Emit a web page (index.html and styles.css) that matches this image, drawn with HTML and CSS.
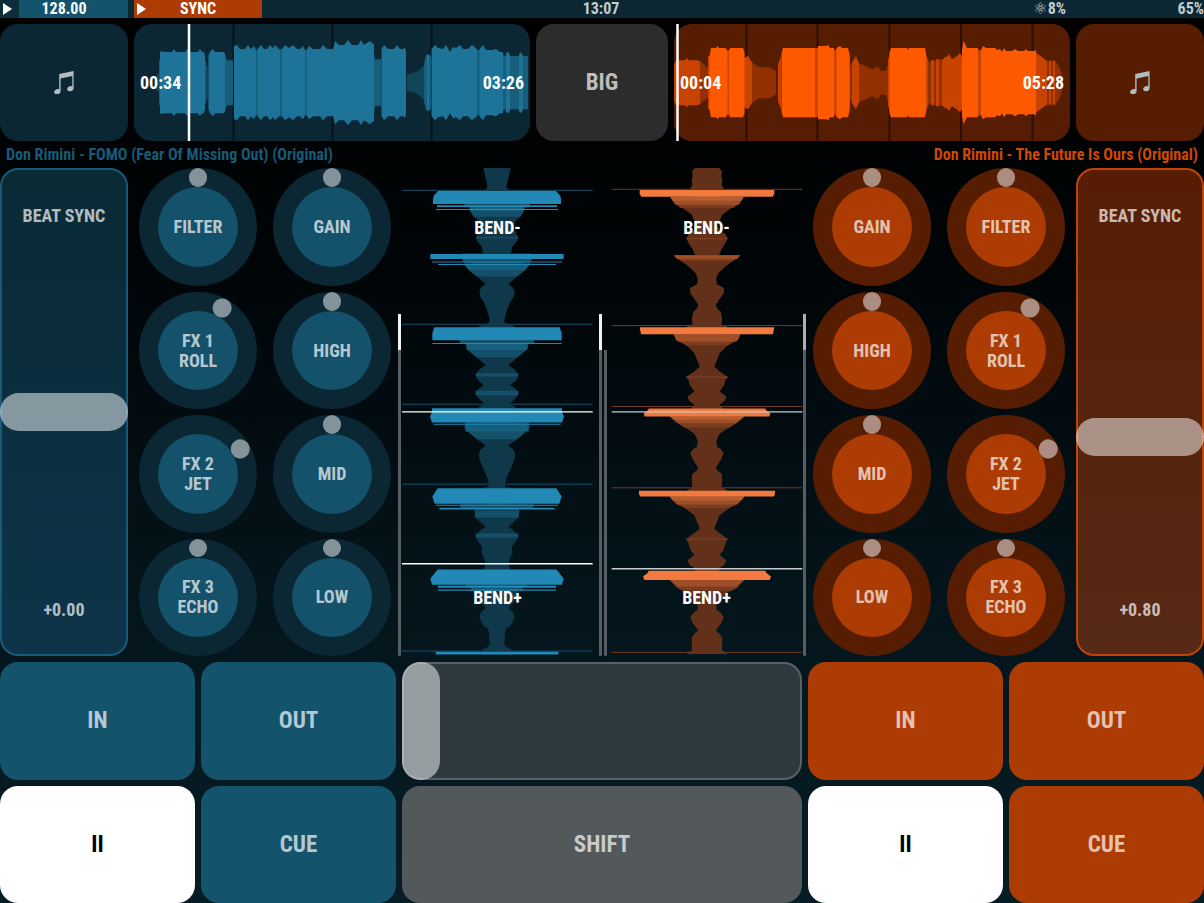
FILE: index.html
```html
<!DOCTYPE html>
<html lang="en">
<head>
<meta charset="utf-8">
<title>DJ Decks</title>
<link rel="stylesheet" href="styles.css">
</head>
<body>
<svg class="defs" aria-hidden="true">
  <symbol id="note" viewBox="0 0 20 23">
    <path d="M5.2 2.9 19.6 0V17.2a3.3 2.6 -20 1 1-1.3-1.9V5.1L6.6 7.4V20.3a3.3 2.6 -20 1 1-1.4-2z"/>
  </symbol>
</svg>
<main class="app">
  <header class="status">
    <div class="tempo blue"><svg class="play" viewBox="0 0 9 12"><path d="M0 0 9 6 0 12z"/></svg><span>128.00</span></div>
    <div class="tempo orange"><svg class="play" viewBox="0 0 9 12"><path d="M0 0 9 6 0 12z"/></svg><span>SYNC</span></div>
    <time class="clock">13:07</time>
    <span class="load"><span class="atom">⚛</span>8%</span>
    <span class="battery">65%</span>
  </header>

  <section class="overviews">
    <button class="tile blue-dark" aria-label="Browse left deck"><svg class="note"><use href="#note"/></svg></button>
    <div class="overview blue-dark">
      <svg viewBox="134 24 396 117" preserveAspectRatio="none" aria-hidden="true">
        <path class="tick" d="M233.500 24V141M332.500 24V141M431.500 24V141"/>
        <g id="ovL">
          <path fill="#114557" d="M155 83V78L157 74H159V83zM205 83V64L208 66V83zM407 83V74L413 73L419 70L424 65L426 60V83z"/>
          <path fill="#175e7b" d="M159 83V60H161V83zM204 83V58L206 62V83zM225 83V54L227 60H233V83zM255 83V50H258V83zM279 83V49H283V83zM304 83V50H307V83zM373 83V46L375 59H381V83zM424 83V64L426 55L428 54L431 56V83zM477 83V50H480V83zM502 83V54L505 56H528V83z"/>
          <path fill="#1d7398" d="M160 83V52L162 51L164 52H172L174 49L176 52H185L187 49L189 52H198L200 49L202 52H204L205 56V83zM208.500 83V56L210 52L213 49L215 52H224L225 54V83zM234 83V46L237 45L240 49H245L248 45L251 49L254 46L256 50V83zM257.500 83V49L261 45L264 49H267L270 45L273 48L275 45L280 50V83zM282 83V49L285 45L289 48L293 45L297 49H300L303 46L305 50V83zM306.500 83V50L309 46L313 49H320L323 45L327 49H333L335 41L339 45L344 45L348 40L352 45H358L361 40L364 45L370 41L373 44L374 43V83zM381.500 83V49L384 45L388 49H394L397 45L400 49H403L405 47L406 52V83zM427 83V56L429 55V83zM431.500 83V49L435 45L438 48L443 49L446 45L450 52L453 47L456 48L460 45L463 49H468L472 45L477 49V83zM479.500 83V49L483 45L486 50H492L496 49L500 52H503V83zM506 83V53L508 52L510 55V83zM519 83V54L521 52L523 56V83z"/>
        </g>
        <use href="#ovL" transform="translate(0 165) scale(1 -1)"/>
        <path class="playhead" d="M189 24V141"/>
      </svg>
      <span>00:34</span><span>03:26</span>
    </div>
    <button class="tile gray-dark">BIG</button>
    <div class="overview orange-dark">
      <svg viewBox="674 24 396 117" preserveAspectRatio="none" aria-hidden="true">
        <path class="tick" d="M746.500 24V141M817.500 24V141M889.500 24V141M961 24V141M1032.500 24V141"/>
        <g id="ovR">
          <path fill="#933000" d="M700 83V61L708 68V83zM752 83V62L759 67H770L776 71V83zM850 83V66L854 60V83zM859 83V63L866 66L872 69L878 66L881 71L886 70L889 62V83zM927 83V58L930 62L935 60L942 59V83zM1047 83V60H1055L1060 68L1063 78V83z"/>
          <path fill="#c94300" d="M674 83V64L676 60H685L687 58L689 60H697L700 61V83zM708 83V56H710V83zM726 83V50H730V83zM744 83V58L748 56L752 62V83zM778 83V64L781 56V83zM815 83V48H818V83zM834 83V50H837V83zM849 83V56H850V83zM852 83V62L856 56L859 63V83zM888 83V60L890 52V83zM925 83V50L928 60V83zM931 83V60H934V83zM936 83V59H939V83zM942 83V60L945 57H947L949 54L952 59L957 56L960 53L962 56V83zM978 83V50H981V83zM1035 83V52L1042 57L1047 61V83zM1049 83V61H1051V83zM1053 83V61H1055V83z"/>
          <path fill="#ff5900" d="M709.500 83V56L711 48H716L717.500 46L719 48H726L727.500 53V83zM729 83V52L730 48H743L744.500 52V83zM781.500 83V54L783 48H815V83zM818 83V46H826L828 45L830 48H834V83zM836.500 83V48L840 46L842 48H848L849.500 54V83zM889.500 83V52L891 48H907L908 50L909 48H925L926 54V83zM962 83V50L963.500 41L967 48H978V83zM981 83V50L983 46L986 48H995L997 50L1000 49L1002 52L1004 48L1006 51H1012L1015 49L1018 51H1024L1026 49L1028 51H1034L1036 50V83z"/>
        </g>
        <use href="#ovR" transform="translate(0 165) scale(1 -1)"/>
        <path class="playhead" d="M677.500 24V141"/>
      </svg>
      <span>00:04</span><span>05:28</span>
    </div>
    <button class="tile orange-dark" aria-label="Browse right deck"><svg class="note"><use href="#note"/></svg></button>
  </section>

  <section class="titles">
    <span class="title-left">Don Rimini - FOMO (Fear Of Missing Out) (Original)</span>
    <span class="title-right">Don Rimini - The Future Is Ours (Original)</span>
  </section>

  <section class="mixer">
    <div class="fader fader-left">
      <label for="tempoL">BEAT SYNC</label><output for="tempoL">+0.00</output>
      <input id="tempoL" type="range" min="0" max="1000" value="499">
    </div>
    <div class="knobs blue-knobs">
      <label class="knob"><span class="cap">FILTER</span><span class="arm"></span><input type="range"></label>
      <label class="knob"><span class="cap">GAIN</span><span class="arm"></span><input type="range"></label>
      <label class="knob"><span class="cap">FX 1<br>ROLL</span><span class="arm at-30"></span><input type="range"></label>
      <label class="knob"><span class="cap">HIGH</span><span class="arm"></span><input type="range"></label>
      <label class="knob"><span class="cap">FX 2<br>JET</span><span class="arm at-60"></span><input type="range"></label>
      <label class="knob"><span class="cap">MID</span><span class="arm"></span><input type="range"></label>
      <label class="knob"><span class="cap">FX 3<br>ECHO</span><span class="arm"></span><input type="range"></label>
      <label class="knob"><span class="cap">LOW</span><span class="arm"></span><input type="range"></label>
    </div>
    <div class="waves">
      <svg viewBox="397 168 410 488" preserveAspectRatio="none" aria-hidden="true">
        <g transform="translate(497 160) scale(.33333)">
          <path stroke="#15506e" stroke-width="3" d="M-285 91H287M-285 493H287M-285 733H287M-285 973H287M-285 1474H287"/>
          <g id="dkL">
            <path fill="#0f394b" d="M0 24H41L28 82L35 88V132H82L80 154L70 170L55 182L50 205L58 220L63 232L62 240L55 250L45 262L42 280H104L98 315L60 350L34 372L48 383L53 397L50 412L40 425L32 445L24 470L22 486L30 491L45 495L57 502V541H112L94 552L88 570L62 592L34 615L55 630L64 645L58 660L40 676L58 689L65 702L58 713L40 730L37 733L55 741V790H98L90 806L60 838L34 857L50 870L55 885L52 900L45 918L35 940L27 960L25 982H38V1035H105L65 1048L68 1053L64 1074L34 1101L50 1112L64 1127L60 1140L45 1160L46 1180L38 1198L34 1212L40 1228V1275H90L65 1290L60 1310L48 1330L34 1345L48 1358L53 1370L50 1380L43 1392L38 1402L27 1405L24 1422L22 1455L28 1462L45 1470V1484H0z"/>
            <path fill="#14506a" d="M0 132H98V142H82L80 154L70 170H0zM0 231H62V235H0zM0 297H104V305H78V315H98L84 332L60 350H0zM0 541H112V549L94 552L92 566L62 592H0zM0 640H64V650H0zM0 693H64V706H0zM0 788H95L98 804L82 820L60 838H0zM0 1033H110V1042L102 1047H0zM0 1053H66V1073H0zM0 1121H64V1133H0zM0 1275H92V1284H78V1293H0z"/>
            <path fill="#175f7e" d="M0 141H82V152H0zM0 315H95L84 330H0zM0 552H90V570H0zM0 792H95V815H0z"/>
            <path fill="#2288b5" d="M0 93H177L190 107L192 118V132H0zM0 136H180V141H0zM0 147H183V150H0zM0 282H200V297H0zM0 305H195V308H0zM0 312H177V315H0zM0 502H188L194 520V541H0zM0 549H194V552H0zM0 745H195V757L201 770L195 788H0zM0 792H190V795H0zM0 985H178L194 1010L187 1032H0zM0 1035H183V1038H0zM0 1044H173V1049H0zM0 1229H178L200 1256L195 1275H0zM0 1278H177V1284H0zM0 1289H177V1293H0zM0 1476H184V1484H0z"/>
          </g>
          <use href="#dkL" transform="scale(-1 1)"/>
          <path stroke="#ffffff" stroke-width="4" d="M-285 756H287M-285 1212H287"/>
        </g>
        <g transform="translate(707 160) scale(.33333)">
          <path stroke="#713a20" stroke-width="3" d="M-286 88H286M-286 497H286M-286 740H286M-286 984H286M-286 1478H286"/>
          <g id="dkR">
            <path fill="#63311a" d="M0 24H36L45 34L43 48L46 62L44 74L51 88V111H110L95 132L68 148L45 165L38 182L30 195L40 213L55 222L62 235L55 250L45 265L36 285H100L80 302L55 320L34 340L28 355L29 372L42 380L51 384L50 400L38 417L26 435L30 445L42 457L45 475L44 494L60 500V523H100L90 541L60 558L38 580L28 605L22 620L38 635L50 642L62 652L55 662L52 675L38 695L45 700L58 710L54 722L38 735L45 741V770H112L95 787L62 805L38 822L28 842L30 861L42 868L50 880L42 900L27 922L30 931L44 942L46 960L44 982L60 991V1010H112L95 1032L65 1046L38 1066L24 1100L22 1108L38 1120L62 1138L55 1152L50 1170L38 1185L58 1202L52 1215L38 1225L36 1233V1261H112L90 1285L62 1298L42 1317L28 1337V1350L40 1358L50 1372L44 1388L26 1412L38 1422L46 1435L45 1472L60 1478V1483H0z"/>
            <path fill="#7b3d20" d="M0 125H100L80 143H0zM0 234H62V238H0zM0 291H96L78 303H0zM0 541H90L62 556H0zM0 650H62V654H0zM0 785H95L68 803H0zM0 1025H98L65 1045H0zM0 1136H62V1140H0zM0 1277H98L75 1292H0z"/>
            <path fill="#9f4f28" d="M0 111H110L95 134H0zM0 286H100L90 297H0zM0 523H100L94 539L88 545H0zM0 770H112L84 790H0zM0 1010H112L88 1034H0zM0 1261H112L88 1280H0z"/>
            <path fill="#b65d31" d="M0 111H110L103 122H0zM0 770H112L98 780H0zM0 1010H112L103 1022H0z"/>
            <path fill="#f27a3e" d="M0 90H202V102L197 110H0zM0 502H202L198 523H0zM0 746H174L180 754L190 760L187 770H0zM0 993H204V1002L201 1010H0zM0 1233H175L178 1240L192 1250L188 1261H0z"/>
          </g>
          <use href="#dkR" transform="scale(-1 1)"/>
          <path stroke="#c6cccd" stroke-width="4" d="M-286 756H286M-286 1227H286"/>
        </g>
        <path fill="#565e61" d="M398 350h3v306h-3zM599 350h3v306h-3zM604 350h3v306h-3zM803 350h3v306h-3z"/>
        <path fill="#f2f2f2" d="M398 314h3v36h-3zM599 314h3v36h-3z"/>
        <path fill="#acb0b1" d="M803 314h3v36h-3z"/>
      </svg>
      <div class="bends">
        <button>BEND-</button><button>BEND-</button>
        <button>BEND+</button><button>BEND+</button>
      </div>
    </div>
    <div class="knobs orange-knobs">
      <label class="knob"><span class="cap">GAIN</span><span class="arm"></span><input type="range"></label>
      <label class="knob"><span class="cap">FILTER</span><span class="arm"></span><input type="range"></label>
      <label class="knob"><span class="cap">HIGH</span><span class="arm"></span><input type="range"></label>
      <label class="knob"><span class="cap">FX 1<br>ROLL</span><span class="arm at-30"></span><input type="range"></label>
      <label class="knob"><span class="cap">MID</span><span class="arm"></span><input type="range"></label>
      <label class="knob"><span class="cap">FX 2<br>JET</span><span class="arm at-60"></span><input type="range"></label>
      <label class="knob"><span class="cap">LOW</span><span class="arm"></span><input type="range"></label>
      <label class="knob"><span class="cap">FX 3<br>ECHO</span><span class="arm"></span><input type="range"></label>
    </div>
    <div class="fader fader-right">
      <label for="tempoR">BEAT SYNC</label><output for="tempoR">+0.80</output>
      <input id="tempoR" type="range" min="0" max="1000" value="554">
    </div>
  </section>

  <section class="pads">
    <button class="tile blue">IN</button>
    <button class="tile blue">OUT</button>
    <div class="crossfader"><input type="range" min="0" max="100" value="0" aria-label="Crossfader"></div>
    <button class="tile orange">IN</button>
    <button class="tile orange">OUT</button>
  </section>
  <section class="pads">
    <button class="tile lit" aria-label="Pause left deck">II</button>
    <button class="tile blue">CUE</button>
    <button class="tile gray">SHIFT</button>
    <button class="tile lit" aria-label="Pause right deck">II</button>
    <button class="tile orange">CUE</button>
  </section>
</main>
</body>
</html>
```
FILE: styles.css
```css
* { box-sizing: border-box; }

body {
  margin: 0;
  background: #000;
  color: #fff;
  font-family: "Liberation Sans Narrow", "Roboto Condensed", Roboto, sans-serif;
  font-weight: 700;
}

button, input, output { font: inherit; color: inherit; }
button { border: 0; padding: 0; background: none; cursor: pointer; }
svg { display: block; }
.defs { position: absolute; width: 0; height: 0; }

.app {
  display: grid;
  grid-template-columns: minmax(0, 1fr);
  grid-template-rows: 18px minmax(100px, 1fr) 15px repeat(6, minmax(100px, 1fr));
  gap: 6px;
  min-height: 100vh;
  background: linear-gradient(#000 0%, #000507 30%, #04141b 65%, #061d26 100%);
}

/* Surfaces */
.blue { background: #14536c; }
.orange { background: #ad3c04; }
.blue-dark { background: #0a2733; }
.orange-dark { background: #561d03; }
.gray { background: #53585a; }
.gray-dark { background: #2c2c2d; }
.lit { background: #fff; }

.tile {
  display: grid;
  place-items: center;
  border-radius: 18px;
  color: rgba(255, 255, 255, .7);
  font-size: 23px;
}
.tile.lit { color: #000; }
.note { width: 20px; height: 23px; fill: #b3bbbe; }

/* Status bar */
.status {
  display: grid;
  grid-template-columns: 128fr 128fr 666fr 126fr 132fr;
  gap: 6px;
  background: #0a2733;
  color: #c4cccf;
  font-size: 16px;
  line-height: 18px;
}
.tempo { position: relative; text-align: center; color: #fff; }
.tempo.blue { background: linear-gradient(90deg, #0c2d3a 19px, #14536c 19px); }
.play { position: absolute; left: 3px; top: 3px; width: 9px; height: 12px; fill: #fff; }
.clock { text-align: center; }
.load { display: flex; justify-content: flex-end; }
.battery { text-align: right; }
.atom { font-family: "DejaVu Sans", sans-serif; font-size: 16px; font-weight: 400; }

/* Track overviews */
.overviews {
  display: grid;
  grid-template-columns: 128fr 396fr 132fr 396fr 128fr;
  gap: 6px;
}
.overview {
  position: relative;
  display: flex;
  align-items: center;
  justify-content: space-between;
  padding: 0 6px;
  border-radius: 18px;
  font-size: 18px;
}
.overview svg { position: absolute; inset: 0; width: 100%; height: 100%; }
.overview span { position: relative; }
.tick { stroke: rgba(0, 0, 0, .5); stroke-width: 2; }
.playhead { stroke: #fff; stroke-width: 2.5; }

.titles {
  display: flex;
  justify-content: space-between;
  padding: 0 6px;
  font-size: 16px;
  line-height: 15px;
  white-space: nowrap;
}
.title-left { color: #185a77; }
.title-right { color: #cf4805; }

/* Mixer */
.mixer {
  grid-row: span 4;
  display: grid;
  grid-template-columns: 128fr 262fr 400fr 262fr 128fr;
  gap: 6px;
}

.fader {
  position: relative;
  display: flex;
  flex-direction: column;
  align-items: center;
  justify-content: space-between;
  padding: 35px 0 33px;
  border: 2px solid;
  border-radius: 18px;
  font-size: 18px;
  line-height: 22px;
}
.fader label, .fader output { color: rgba(255, 255, 255, .7); }
.fader-left { border-color: #175b78; background: linear-gradient(#0a2a36, #0d3449); }
.fader-right { border-color: #c24304; background: linear-gradient(#561d04, #562a17); }
.fader input {
  position: absolute;
  inset: -2px;
  width: calc(100% + 4px);
  height: calc(100% + 4px);
  margin: 0;
  writing-mode: vertical-lr;
}

.fader input, .crossfader input { appearance: none; background: transparent; }
.fader input::-webkit-slider-runnable-track { width: 100%; height: 100%; }
.fader input::-webkit-slider-thumb {
  appearance: none;
  width: 100%;
  height: 38px;
  border-radius: 19px;
  background: rgba(255, 255, 255, .5);
}

.knobs {
  display: grid;
  grid-template-columns: 1fr 1fr;
  grid-template-rows: repeat(4, 1fr);
  gap: 6px;
  justify-items: center;
}
.knob {
  position: relative;
  display: grid;
  place-items: center;
  height: 100%;
  aspect-ratio: 1;
  border-radius: 50%;
  color: rgba(255, 255, 255, .7);
  font-size: 18px;
  line-height: 20px;
  text-align: center;
}
.cap {
  display: grid;
  place-content: center;
  width: 68%;
  height: 68%;
  border-radius: 50%;
}
.arm { position: absolute; inset: 0; }
.arm::before {
  content: "";
  position: absolute;
  left: 42%;
  top: 0;
  width: 16%;
  height: 16%;
  border-radius: 50%;
}
.arm.at-30 { transform: rotate(30deg); }
.arm.at-60 { transform: rotate(60deg); }
.knob input { position: absolute; inset: 0; width: 100%; height: 100%; margin: 0; opacity: 0; }
.blue-knobs .knob { background: #0a2733; }
.blue-knobs .cap { background: #14516a; }
.blue-knobs .arm::before { background: #84939a; }
.orange-knobs .knob { background: #561d03; }
.orange-knobs .cap { background: #ad3c04; }
.orange-knobs .arm::before { background: #ab8e81; }

/* Scrolling waveforms; the level meters reach into the side gaps */
.waves { position: relative; }
.waves svg {
  position: absolute;
  inset: 0 -5px;
  width: calc(100% + 10px);
  height: 100%;
}
.bends {
  position: relative;
  display: grid;
  grid-template-columns: 1fr 1fr;
  align-content: space-between;
  column-gap: 18px;
  height: 100%;
  font-size: 18px;
}
.bends button { height: 118px; }

/* Pads */
.pads {
  display: grid;
  grid-template-columns: 195fr 195fr 400fr 195fr 195fr;
  gap: 6px;
}
.crossfader {
  position: relative;
  border: 2px solid #5b6164;
  border-radius: 18px;
  background: #2d3a40;
}
.crossfader input {
  position: absolute;
  inset: -2px;
  width: calc(100% + 4px);
  height: calc(100% + 4px);
  margin: 0;
}
.crossfader input::-webkit-slider-runnable-track { height: 100%; }
.crossfader input::-webkit-slider-thumb {
  appearance: none;
  width: 38px;
  height: 100%;
  border-radius: 19px;
  background: rgba(255, 255, 255, .5);
}
```
